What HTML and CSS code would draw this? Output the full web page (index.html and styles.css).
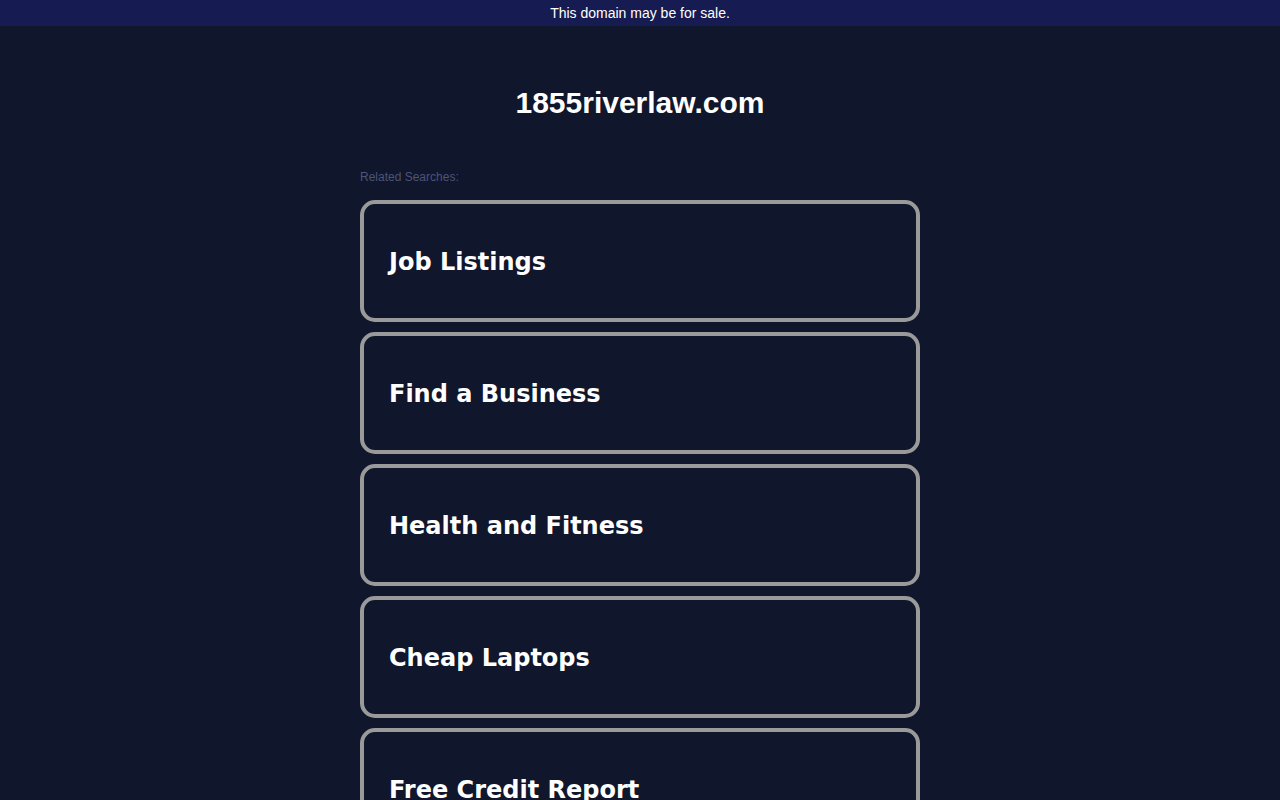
FILE: index.html
```html
<!DOCTYPE html>
<html>
<head>
<meta charset="utf-8">
<link rel="stylesheet" href="styles.css">
</head>
<body>
<div class="topbar">This domain may be for sale.</div>
<main class="content">
  <h1 class="domain">1855riverlaw.com</h1>
  <div class="related">Related Searches:</div>
  <div class="list">
    <a class="card" href="#">Job Listings</a>
    <a class="card" href="#">Find a Business</a>
    <a class="card" href="#">Health and Fitness</a>
    <a class="card" href="#">Cheap Laptops</a>
    <a class="card" href="#">Free Credit Report</a>
  </div>
</main>
</body>
</html>
```
FILE: styles.css
```css
html, body {
  margin: 0;
  padding: 0;
  background: #10162b;
  font-family: "Liberation Sans", Arial, sans-serif;
}
.topbar {
  height: 26px;
  background: #161b52;
  color: #ffffff;
  font-size: 14px;
  line-height: 26px;
  text-align: center;
}
.content {
  width: 560px;
  margin: 0 auto;
}
.domain {
  margin: 0;
  padding-top: 60px;
  height: 34px;
  line-height: 34px;
  font-size: 30px;
  font-weight: bold;
  color: #ffffff;
  text-align: center;
}
.related {
  margin-top: 50px;
  font-size: 12px;
  line-height: 14px;
  color: #4b5479;
}
.list {
  margin-top: 16px;
  display: flex;
  flex-direction: column;
  gap: 10px;
}
.card {
  display: flex;
  align-items: center;
  box-sizing: border-box;
  height: 122px;
  border: 4px solid #9a9a9a;
  border-radius: 15px;
  padding: 2px 25px 0;
  color: #ffffff;
  text-decoration: none;
  font-family: "DejaVu Sans", Verdana, sans-serif;
  font-weight: bold;
  font-size: 24px;
}
```
